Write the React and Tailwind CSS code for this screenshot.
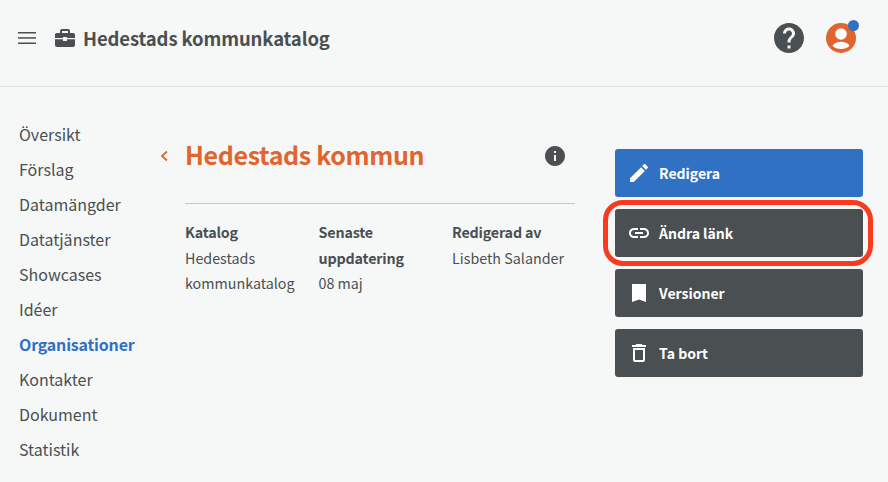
const navItems = [
  "Översikt",
  "Förslag",
  "Datamängder",
  "Datatjänster",
  "Showcases",
  "Idéer",
  "Organisationer",
  "Kontakter",
  "Dokument",
  "Statistik",
];

function Icon({ d, className }) {
  return (
    <svg viewBox="0 0 24 24" fill="currentColor" className={className}>
      <path d={d} />
    </svg>
  );
}

const paths = {
  edit: "M3 17.25V21h3.75L17.81 9.94l-3.75-3.75L3 17.25zM20.71 7.04c.39-.39.39-1.02 0-1.41l-2.34-2.34c-.39-.39-1.02-.39-1.41 0l-1.83 1.83 3.75 3.75 1.83-1.83z",
  link: "M3.9 12c0-1.71 1.39-3.1 3.1-3.1h4V7H7c-2.76 0-5 2.24-5 5s2.24 5 5 5h4v-1.9H7c-1.71 0-3.1-1.39-3.1-3.1zM8 13h8v-2H8v2zm9-6h-4v1.9h4c1.71 0 3.1 1.39 3.1 3.1s-1.39 3.1-3.1 3.1h-4V17h4c2.76 0 5-2.24 5-5s-2.24-5-5-5z",
  bookmark: "M5 3h14v18l-7-2.6L5 21z",
  trash: "M6 19c0 1.1.9 2 2 2h8c1.1 0 2-.9 2-2V7H6v12zM8 9h8v10H8V9zm7.5-5l-1-1h-5l-1 1H5v2h14V4z",
  help: "M12 2C6.48 2 2 6.48 2 12s4.48 10 10 10 10-4.48 10-10S17.52 2 12 2zm1 17h-2v-2h2v2zm2.07-7.75l-.9.92C13.45 12.9 13 13.5 13 15h-2v-.5c0-1.1.45-2.1 1.17-2.83l1.24-1.26c.37-.36.59-.86.59-1.41 0-1.1-.9-2-2-2s-2 .9-2 2H8c0-2.21 1.79-4 4-4s4 1.79 4 4c0 .88-.36 1.68-.93 2.25z",
  info: "M12 2C6.48 2 2 6.48 2 12s4.48 10 10 10 10-4.48 10-10S17.52 2 12 2zm1 15h-2v-6h2v6zm0-8h-2V7h2v2z",
};

function ActionButton({ icon, label, blue }) {
  return (
    <button
      className={`flex h-12 w-full items-center rounded-[3px] pl-[12px] text-[14px] font-bold leading-5 text-white ${
        blue ? "bg-[#3071c3]" : "bg-[#4a4f52]"
      }`}
    >
      <span className="flex w-[32px] justify-start">
        <Icon d={icon} className="h-[24px] w-[24px]" />
      </span>
      {label}
    </button>
  );
}

export default function App() {
  return (
    <div className="h-[482px] w-[888px] overflow-hidden bg-[#f6f8f8] font-['Noto_Sans_CJK_SC',sans-serif] text-[#4a4f52]">
      <header className="flex h-[87px] items-center border-b border-[#dfe1e1] pb-[10px] pl-[16px] pr-[32px]">
        <svg viewBox="0 0 22 14" className="mr-[17px] h-[14px] w-[22px]" fill="currentColor">
          <rect x="2" y="1" width="18" height="1.5" />
          <rect x="2" y="6.2" width="18" height="1.5" />
          <rect x="2" y="11.5" width="18" height="1.5" />
        </svg>
        <svg viewBox="0 0 20 18" className="mr-[8px] h-[18px] w-[20px]" fill="currentColor">
          <path d="M7 0h6c1.1 0 2 .9 2 2v2h3.2c1 0 1.8.8 1.8 1.8V9h-8V8H8v1H0V5.800C0 4.800.8 4 1.800 4H5V2c0-1.100.9-2 2-2zm0 2v2h6V2H7zM0 10.200h8V12h4v-1.800h8V16c0 1.100-.9 2-2 2H2c-1.100 0-2-.9-2-2v-5.800z" />
        </svg>
        <span className="text-[18.5px] font-bold leading-6 tracking-[-0.12px]">Hedestads kommunkatalog</span>
        <div className="ml-auto flex items-center gap-[19px]">
          <Icon d={paths.help} className="h-[36px] w-[36px]" />
          <div className="relative h-[30px] w-[30px] overflow-visible">
            <svg viewBox="0 0 30 30" className="h-[30px] w-[30px]">
              <circle cx="15" cy="15" r="15" fill="#e0652f" />
              <circle cx="15" cy="11" r="5.800" fill="#fff" />
              <path d="M6.500 22.800C8 20 11.500 18.700 15 18.700s7 1.300 8.500 4.100C21.500 25 18.500 26 15 26s-6.500-1-8.500-3.200z" fill="#fff" />
            </svg>
            <span className="absolute right-[-3px] top-[-3px] h-[11px] w-[11px] rounded-full bg-[#3071c3]" />
          </div>
        </div>
      </header>

      <div className="flex pt-[30px]">
        <nav className="flex w-[141px] shrink-0 flex-col pl-[19px]">
          {navItems.map((item) => (
            <a
              key={item}
              className={`h-[35px] text-[16px] leading-[35px] ${
                item === "Organisationer" ? "font-bold tracking-[-0.18px] text-[#3071c3]" : ""
              }`}
            >
              {item}
            </a>
          ))}
        </nav>

        <main className="flex w-[434px] shrink-0 flex-col pt-[21px]">
          <div className="flex h-[36px] items-center">
            <svg viewBox="0 0 8 12" className="ml-[19px] h-[12px] w-[8px]" fill="none" stroke="#e0652f" strokeWidth="1.800">
              <path d="M7 1.500 2 6l5 4.500" />
            </svg>
            <h1 className="ml-[17px] pb-[4px] text-[25px] font-bold leading-9 tracking-[-0.36px] text-[#e0652f]">Hedestads kommun</h1>
            <Icon d={paths.info} className="ml-auto mr-[8px] h-[24px] w-[24px]" />
          </div>
          <div className="ml-[44px] mt-[29px] grid grid-cols-[133.500px_133.500px_1fr] border-t border-[#c4c7c8] pt-[15px] text-[14.300px] leading-[25.500px]">
            <div>
              <div className="font-bold tracking-[-0.17px]">Katalog</div>
              <div>Hedestads</div>
              <div>kommunkatalog</div>
            </div>
            <div>
              <div className="font-bold tracking-[-0.17px]">Senaste</div>
              <div className="font-bold tracking-[-0.17px]">uppdatering</div>
              <div>08 maj</div>
            </div>
            <div>
              <div className="font-bold tracking-[-0.17px]">Redigerad av</div>
              <div className="whitespace-nowrap">Lisbeth Salander</div>
            </div>
          </div>
        </main>

        <aside className="ml-[40px] flex w-[248px] shrink-0 flex-col gap-3 pt-[32px]">
          <ActionButton blue icon={paths.edit} label="Redigera" />
          <div className="relative">
            <ActionButton icon={paths.link} label="Ändra länk" />
            <div className="absolute bottom-[-9px] left-[-12.500px] right-[-10px] top-[-9px] rounded-[20px] border-[5px] border-[#f93a1f]" />
          </div>
          <ActionButton icon={paths.bookmark} label="Versioner" />
          <ActionButton icon={paths.trash} label="Ta bort" />
        </aside>
      </div>
    </div>
  );
}
